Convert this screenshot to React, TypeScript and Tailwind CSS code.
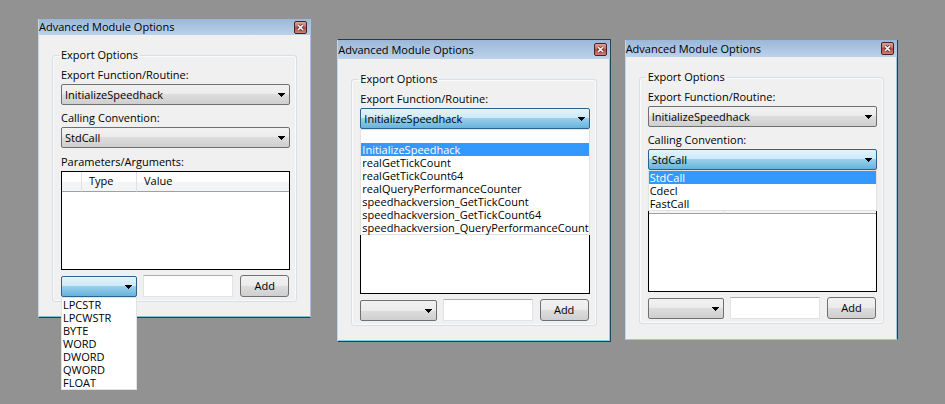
import { useId } from "react";

type DialogProps = {
  className: string;
  titleClassName: string;
  open: "routine" | "convention" | "type";
};

const routines = [
  "",
  "InitializeSpeedhack",
  "realGetTickCount",
  "realGetTickCount64",
  "realQueryPerformanceCounter",
  "speedhackversion_GetTickCount",
  "speedhackversion_GetTickCount64",
  "speedhackversion_QueryPerformanceCount",
];
const conventions = ["StdCall", "Cdecl", "FastCall"];
const types = ["LPCSTR", "LPCWSTR", "BYTE", "WORD", "DWORD", "QWORD", "FLOAT"];

type ComboProps = {
  id?: string;
  label?: string;
  options: string[];
  value: string;
  open: boolean;
};

function Combo({ id, label, options, value, open }: ComboProps) {
  return (
    <div className="relative">
      <select
        id={id}
        aria-label={label}
        defaultValue={value}
        className={`block h-[21px] w-full appearance-none rounded-[2px] border pr-5 pl-[3px] leading-4 outline-none ${
          open
            ? "border-[#2c628b] bg-[linear-gradient(#e3f4fc,#cbe8f8_50%,#98cfea_50%,#68b3db)]"
            : "border-[#707070] bg-[linear-gradient(#f2f2f2,#ebebeb_50%,#dddddd_50%,#cfcfcf)]"
        }`}
      >
        {!options.includes(value) && <option value={value}>{value}</option>}
        {options.map((option) => (
          <option key={option} value={option}>
            {option}
          </option>
        ))}
      </select>
      <svg
        viewBox="0 0 7 4"
        className="pointer-events-none absolute top-[9px] right-[5px] h-1 w-[7px]"
        shapeRendering="crispEdges"
      >
        <path d="M0 0h7v1H6v1H5v1H4v1H3V3H2V2H1V1H0z" fill="#000" />
      </svg>
      {open && (
        <ul
          role="listbox"
          className="absolute top-full right-0 left-0 z-10 border border-[#e2e2e2] bg-white"
        >
          {options.map((option) => (
            <li
              key={option}
              role="option"
              aria-selected={option === value}
              className={`h-[13px] pl-px leading-[13px] whitespace-nowrap ${
                option !== "" && option === value ? "bg-[#3399ff] text-white" : ""
              }`}
            >
              {option}
            </li>
          ))}
        </ul>
      )}
    </div>
  );
}

function Dialog({ className, titleClassName, open }: DialogProps) {
  const id = useId();

  return (
    <section
      className={`min-w-0 flex-1 border-x border-b border-l-[#c3d6e6] bg-[#f0f0f0] ${className}`}
    >
      <header
        className={`flex items-center justify-between bg-[linear-gradient(#9ab8d9,#bcd2e9)] pr-[3px] ${titleClassName}`}
      >
        <h2 className="leading-4">Advanced Module Options</h2>
        <button
          type="button"
          aria-label="Close"
          className="flex size-[13px] items-center justify-center rounded-[2px] border border-[#4d2024] bg-[linear-gradient(#dca39b,#c4665c_50%,#b04b41_50%,#cf8075)]"
        >
          <svg viewBox="0 0 7 7" className="size-[7px]">
            <path d="M1 1l5 5M6 1L1 6" stroke="#5c3030" strokeWidth="3" />
            <path d="M1 1l5 5M6 1L1 6" stroke="#fff" strokeWidth="1.6" />
          </svg>
        </button>
      </header>

      <div className="px-[13px] pt-3 pb-[15px]">
        <fieldset className="min-w-0 rounded-[3px] border border-[#d5dfe5] pr-1.5 pb-1 pl-2 shadow-[inset_0_0_0_1px_#fafafa]">
          <legend className="-ml-0.5 px-0.5 leading-4">Export Options</legend>
          <div className="mt-1 flex flex-col gap-[5px]">
            <div>
              <label htmlFor={`${id}-routine`} className="block pb-0.5 leading-[15px]">
                Export Function/Routine:
              </label>
              <Combo
                id={`${id}-routine`}
                options={routines}
                value="InitializeSpeedhack"
                open={open === "routine"}
              />
            </div>
            <div>
              <label htmlFor={`${id}-convention`} className="block pb-0.5 leading-[15px]">
                Calling Convention:
              </label>
              <Combo
                id={`${id}-convention`}
                options={conventions}
                value="StdCall"
                open={open === "convention"}
              />
            </div>
            <div>
              <h3 id={`${id}-params`} className="leading-[18px]">
                Parameters/Arguments:
              </h3>
              <div className="h-[99px] border border-black bg-white">
                <table
                  aria-labelledby={`${id}-params`}
                  className="w-full table-fixed border-separate border-spacing-0"
                >
                  <thead className="bg-[linear-gradient(#ffffff_50%,#f3f4f6_50%)] text-left">
                    <tr className="h-5">
                      <th className="w-5 border-r border-b border-r-[#dfe0e2] border-b-[#a0a0a0] p-0" />
                      <th className="w-[55px] border-r border-b border-r-[#dfe0e2] border-b-[#a0a0a0] py-0 pr-0 pl-[7px] font-normal">
                        Type
                      </th>
                      <th className="border-b border-[#a0a0a0] py-0 pr-0 pl-[7px] font-normal">
                        Value
                      </th>
                    </tr>
                  </thead>
                </table>
              </div>
            </div>
            <div className="flex items-end">
              <div className="w-1/3">
                <Combo label="Type" options={types} value="" open={open === "type"} />
              </div>
              <input
                type="text"
                aria-label="Value"
                className="ml-1.5 h-[22px] min-w-0 flex-1 border border-[#e2e3ea] border-t-[#abadb3] bg-white px-1 outline-none"
              />
              <button
                type="button"
                className="mr-px ml-[7px] h-[22px] w-[49px] rounded-[3px] border border-[#707070] bg-[linear-gradient(#f2f2f2,#ebebeb_50%,#dddddd_50%,#cfcfcf)] leading-4"
              >
                Add
              </button>
            </div>
          </div>
        </fieldset>
      </div>
    </section>
  );
}

function App() {
  return (
    <main className="flex min-h-screen items-start bg-[#929292] pr-[47px] pl-[38px] font-['Open_Sans','Noto_Sans',sans-serif] text-[11px] text-black">
      <Dialog
        open="type"
        className="mt-[19px] mr-[26px] border-r-[#a9c3dc] border-b-[#0f4c57] shadow-[inset_0_-1px_0_#7cc4d8]"
        titleClassName="h-4"
      />
      <Dialog
        open="routine"
        className="mt-[39px] mr-[14px] border-t border-t-[#33373c] border-r-[#1f4a58] border-b-[#0f4c57] shadow-[inset_-1px_-1px_0_#7fd0ea]"
        titleClassName="h-[19px]"
      />
      <Dialog
        open="convention"
        className="mt-10 border-r-[#0f4c57] border-b-[#a9c3dc] shadow-[inset_-1px_0_0_#9cc6de]"
        titleClassName="h-[17px]"
      />
    </main>
  );
}

export default App;
